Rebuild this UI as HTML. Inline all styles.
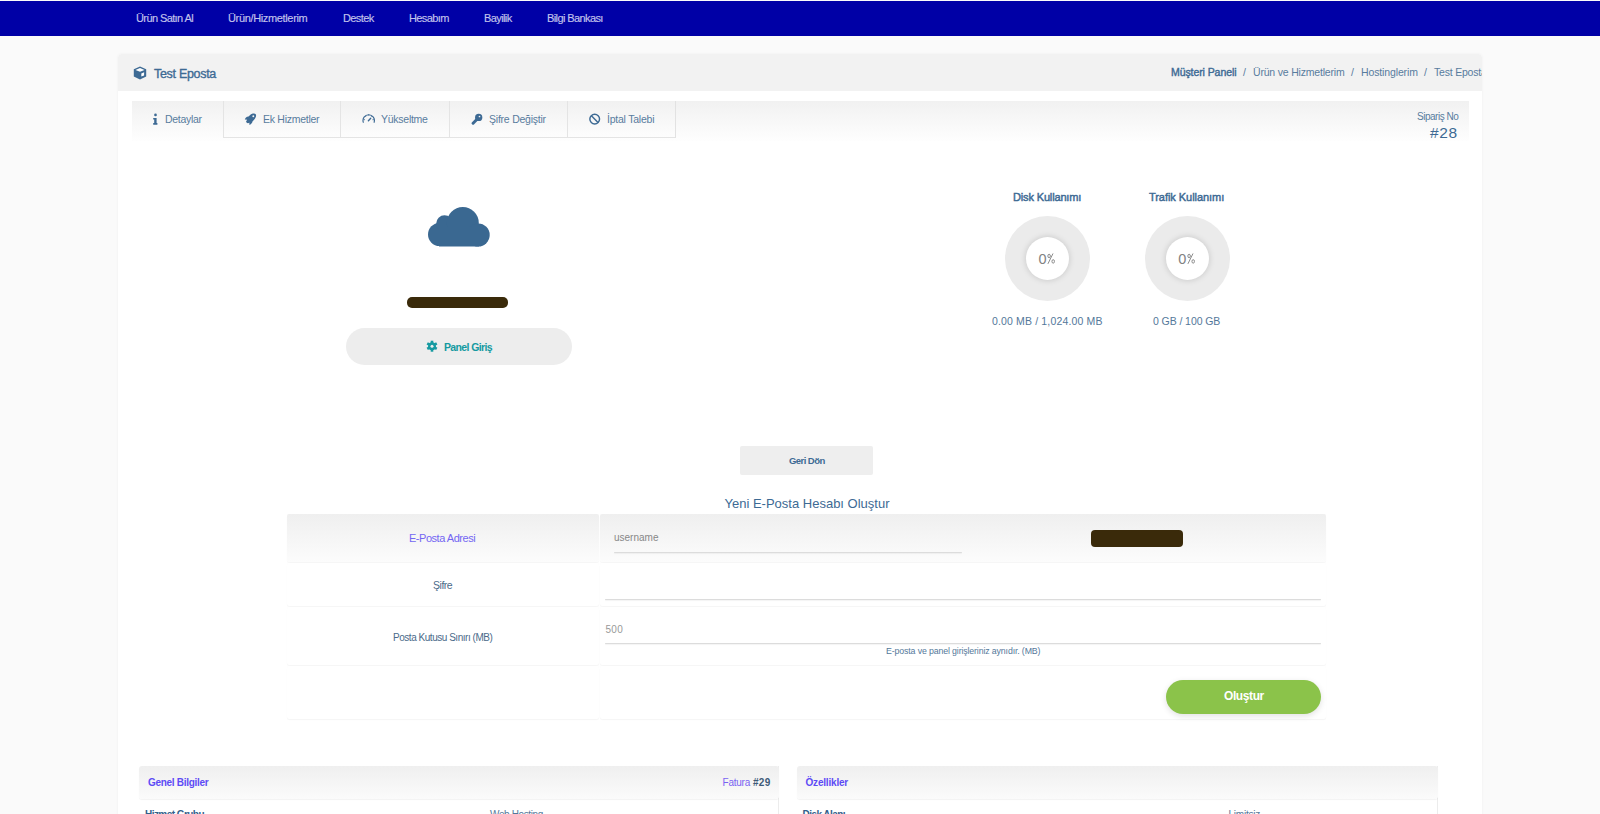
<!DOCTYPE html>
<html><head><meta charset="utf-8">
<style>
*{margin:0;padding:0;box-sizing:border-box}
html,body{width:1600px;height:814px;overflow:hidden;background:#fafafa;font-family:"Liberation Sans",sans-serif}
.a{position:absolute}
.t{position:absolute;white-space:nowrap;line-height:1}
#nav{left:0;top:1px;width:1600px;height:35px;background:#0000a6}
#nav .t{color:#c3c3ec;font-size:11px;top:12px;letter-spacing:-0.6px;-webkit-text-stroke:0.15px #c3c3ec}
#card{left:118px;top:54px;width:1364px;height:800px;background:#fff;border-radius:4px;box-shadow:0 0 3px rgba(0,0,0,0.05)}
#chead{left:118px;top:54px;width:1364px;height:37px;background:#f2f2f2;border-radius:4px 4px 0 0}
.blue{color:#3d6a94}
#tabs{left:132px;top:101px;width:1337px;height:40px;background:linear-gradient(#f1f1f1,#fefefe)}
.tab{position:absolute;top:101px;height:37px;border-left:1px solid #e4e4e4;border-bottom:1px solid #e4e4e4}
.tabt{color:#587c9e;font-size:10.5px;top:114px}
.donut{position:absolute;width:85px;height:85px;border-radius:50%;background:#ebebeb}
.donut .in{position:absolute;left:21px;top:21px;width:43px;height:43px;border-radius:50%;background:#fff;box-shadow:0 0 6px rgba(0,0,0,0.17)}
.cell{position:absolute;background:#fff;border-radius:2px;box-shadow:0 1px 1px rgba(0,0,0,0.04),0 0 1px rgba(0,0,0,0.03)}
.uline{position:absolute;height:1px;background:#dcdcdc;box-shadow:0 1px 1px rgba(0,0,0,0.05);border-radius:1px}
.redact{position:absolute;background:#3a2a0a;border-radius:4px}
.vio{color:#5d4bf5}
.pct{font-size:14.5px;color:#828282}
.pct span{display:inline-block;transform:scaleX(0.6);transform-origin:0 0;margin-left:0.8px}
.lbl{color:#4b6a89}
</style></head><body>
<div id="nav" class="a">
  <div class="t" style="left:136px">Ürün Satın Al</div>
  <div class="t" style="left:228px;letter-spacing:-0.35px">Ürün/Hizmetlerim</div>
  <div class="t" style="left:343px">Destek</div>
  <div class="t" style="left:409px">Hesabım</div>
  <div class="t" style="left:484px">Bayilik</div>
  <div class="t" style="left:547px">Bilgi Bankası</div>
</div>

<div id="card" class="a"></div>
<div id="chead" class="a"></div>
<!-- cube icon -->
<svg class="a" style="left:133px;top:66px" width="14" height="14" viewBox="0 0 14 14">
  <path d="M7 0.6 L13.2 3.2 L13.2 10.6 L7 13.4 L0.8 10.6 L0.8 3.2 Z" fill="#3d6a94"/>
  <path d="M7 2.1 L11.5 3.9 L7 5.7 L2.5 3.9 Z" fill="#fff"/>
  <path d="M8.3 7.6 L11.1 6.3 L11.1 9.4 L8.3 10.6 Z" fill="#fff"/>
</svg>
<div class="t blue" style="left:154px;top:68px;font-size:12.5px;-webkit-text-stroke:0.35px #3d6a94;letter-spacing:-0.3px">Test Eposta</div>

<!-- breadcrumb -->
<div class="a" style="left:1150px;top:54px;width:332px;height:37px;overflow:hidden">
  <div class="t" style="left:21px;top:13px;font-size:10.5px;-webkit-text-stroke:0.4px #3d6a94;color:#3d6a94;letter-spacing:-0.08px">Müşteri Paneli</div>
  <div class="t" style="left:93px;top:13px;font-size:10.5px;color:#587c9e">/</div>
  <div class="t" style="left:103px;top:13px;font-size:10.5px;color:#587c9e;letter-spacing:-0.19px">Ürün ve Hizmetlerim</div>
  <div class="t" style="left:201px;top:13px;font-size:10.5px;color:#587c9e">/</div>
  <div class="t" style="left:211px;top:13px;font-size:10.5px;color:#587c9e;letter-spacing:-0.13px">Hostinglerim</div>
  <div class="t" style="left:274px;top:13px;font-size:10.5px;color:#587c9e">/</div>
  <div class="t" style="left:284px;top:13px;font-size:10.5px;color:#587c9e;letter-spacing:-0.2px">Test Eposta</div>
</div>

<!-- tabs -->
<div id="tabs" class="a"></div>
<div class="a" style="left:132px;top:101px;width:92px;height:40px;background:linear-gradient(#f1f1f1,#fefefe)"></div>
<div class="tab" style="left:223px;width:118px"></div>
<div class="tab" style="left:340px;width:109px"></div>
<div class="tab" style="left:449px;width:119px"></div>
<div class="tab" style="left:567px;width:109px;border-right:1px solid #e2e2e2"></div>
<!-- info icon -->
<svg class="a" style="left:152px;top:113px" width="6" height="12" viewBox="0 0 6 12">
  <circle cx="3.5" cy="1.9" r="1.35" fill="#3d6a94"/>
  <path d="M1.2 5 H4.6 V10 H5.4 V11.8 H1.2 V10 H2.2 V6.6 H1.2 Z" fill="#3d6a94"/>
</svg>
<div class="t tabt" style="left:165px;letter-spacing:-0.3px">Detaylar</div>
<!-- rocket icon -->
<svg class="a" style="left:244px;top:113px" width="13" height="13" viewBox="0 0 13 13">
  <g fill="#3d6a94">
  <ellipse cx="7.5" cy="5" rx="5.7" ry="3.1" transform="rotate(-45 7.5 5)"/>
  <path d="M5.4 3.4 L3 3.8 C2.2 4.2 1.3 5.3 0.8 6.6 L4 6.8 Z"/>
  <path d="M8.6 6.6 L8.3 9.2 C7.9 10.2 6.7 11.4 5.5 11.9 L5.2 8.7 Z"/>
  <circle cx="3.9" cy="8.6" r="1.7"/>
  </g>
  <circle cx="9.3" cy="3.3" r="0.95" fill="#f3f3f3"/>
</svg>
<div class="t tabt" style="left:263px;letter-spacing:-0.27px">Ek Hizmetler</div>
<!-- gauge icon -->
<svg class="a" style="left:362px;top:113px" width="13" height="11" viewBox="0 0 13 11">
  <path d="M1.3 9.3 A5.7 5.7 0 1 1 12.1 9.3" fill="none" stroke="#3d6a94" stroke-width="1.15" stroke-linecap="round"/>
  <path d="M6.4 7.7 L8.7 5.3" stroke="#3d6a94" stroke-width="1.4" stroke-linecap="round"/>
  <path d="M1.6 6.7 H2.9 M10.5 6.7 H11.8 M3.4 3.2 L4.2 4 M6.7 1.4 V2.6 M10 3.2 L9.2 4" stroke="#3d6a94" stroke-width="0.9"/>
</svg>
<div class="t tabt" style="left:381px;letter-spacing:-0.26px">Yükseltme</div>
<!-- key icon -->
<svg class="a" style="left:471px;top:113px" width="12" height="12" viewBox="0 0 12 12">
  <circle cx="7.7" cy="4.4" r="3.65" fill="#3d6a94"/>
  <path d="M6 6.3 L2.1 10.2" stroke="#3d6a94" stroke-width="3" stroke-linecap="round"/>
  <circle cx="8.5" cy="3.5" r="0.85" fill="#f3f3f3"/>
</svg>
<div class="t tabt" style="left:489px;letter-spacing:-0.23px">Şifre Değiştir</div>
<!-- ban icon -->
<svg class="a" style="left:589px;top:113px" width="12" height="13" viewBox="0 0 12 13">
  <circle cx="5.7" cy="6.1" r="4.85" fill="none" stroke="#3d6a94" stroke-width="1.45"/>
  <path d="M2.4 2.8 L9 9.4" stroke="#3d6a94" stroke-width="1.45"/>
</svg>
<div class="t tabt" style="left:607px;letter-spacing:-0.23px">İptal Talebi</div>
<div class="t" style="left:1417px;top:112px;font-size:10px;color:#587c9e;letter-spacing:-0.49px">Sipariş No</div>
<div class="t" style="left:1430px;top:125px;font-size:15.5px;color:#3d6a94;letter-spacing:0.6px">#28</div>

<!-- cloud -->
<svg class="a" style="left:428px;top:207px" width="62" height="40" viewBox="0 0 62 40">
  <g fill="#3a6891">
    <circle cx="11.5" cy="27.5" r="11.5"/>
    <circle cx="16.5" cy="16.5" r="8.3"/>
    <circle cx="34.8" cy="16" r="16"/>
    <circle cx="50.2" cy="28" r="11.5"/>
    <rect x="11" y="20" width="40" height="19.5"/>
  </g>
</svg>
<div class="redact" style="left:406.5px;top:296.5px;width:101.5px;height:11.3px;border-radius:5px"></div>
<div class="a" style="left:346px;top:328px;width:226px;height:37px;border-radius:18.5px;background:#ededed"></div>
<!-- cog -->
<svg class="a" style="left:426px;top:340px" width="12" height="12" viewBox="0 0 12 12">
  <g fill="#159aa1">
    <circle cx="6" cy="6.2" r="3.9"/>
    <g stroke="#159aa1" stroke-width="2.6">
      <path d="M6 0.7 V11.7"/><path d="M1.24 3.45 L10.76 8.95"/><path d="M1.24 8.95 L10.76 3.45"/>
    </g>
  </g>
  <circle cx="6" cy="6.2" r="1.5" fill="#ededed"/>
</svg>
<div class="t" style="left:444px;top:341.5px;font-size:10.5px;font-weight:700;color:#159aa1;letter-spacing:-0.63px">Panel Giriş</div>

<!-- gauges -->
<div class="t" style="left:1013px;top:192px;font-size:11px;-webkit-text-stroke:0.45px #3d6a94;color:#3d6a94;letter-spacing:-0.15px">Disk Kullanımı</div>
<div class="t" style="left:1149px;top:192px;font-size:11px;-webkit-text-stroke:0.45px #3d6a94;color:#3d6a94;letter-spacing:-0.05px">Trafik Kullanımı</div>
<div class="donut" style="left:1005px;top:216px"><div class="in"></div></div>
<div class="donut" style="left:1144.5px;top:216px"><div class="in"></div></div>
<div class="t pct" style="left:1038.6px;top:251.7px">0<svg style="position:absolute;left:8.6px;top:1.5px" width="9" height="12" viewBox="0 0 9 12"><g fill="none" stroke="#858585" stroke-width="0.95"><ellipse cx="2.1" cy="3" rx="1.25" ry="1.75"/><ellipse cx="6.2" cy="8.4" rx="1.25" ry="1.75"/><path d="M0.9 10.9 L6 0.5"/></g></svg></div>
<div class="t pct" style="left:1178.2px;top:251.7px">0<svg style="position:absolute;left:8.6px;top:1.5px" width="9" height="12" viewBox="0 0 9 12"><g fill="none" stroke="#858585" stroke-width="0.95"><ellipse cx="2.1" cy="3" rx="1.25" ry="1.75"/><ellipse cx="6.2" cy="8.4" rx="1.25" ry="1.75"/><path d="M0.9 10.9 L6 0.5"/></g></svg></div>
<div class="t" style="left:992px;top:315.5px;font-size:10.5px;color:#54789a;letter-spacing:0.15px">0.00 MB / 1,024.00 MB</div>
<div class="t" style="left:1153px;top:315.5px;font-size:10.5px;color:#54789a;letter-spacing:-0.08px">0 GB / 100 GB</div>

<!-- geri don -->
<div class="a" style="left:740px;top:446px;width:133px;height:28.5px;border-radius:2px;background:#eeeeee"></div>
<div class="t" style="left:789px;top:456px;font-size:9.5px;font-weight:700;color:#3d6a94;letter-spacing:-0.56px">Geri Dön</div>
<div class="t" style="left:724.5px;top:497px;font-size:13px;color:#3d6a94">Yeni E-Posta Hesabı Oluştur</div>

<!-- table -->
<div class="cell" style="left:287px;top:514px;width:311.5px;height:48px;background:linear-gradient(#efefef,#fcfcfc)"></div>
<div class="cell" style="left:600px;top:514px;width:726px;height:48px;background:linear-gradient(#efefef,#fcfcfc)"></div>
<div class="cell" style="left:287px;top:562.5px;width:311.5px;height:43.5px"></div>
<div class="cell" style="left:600px;top:562.5px;width:726px;height:43.5px"></div>
<div class="cell" style="left:287px;top:606.5px;width:311.5px;height:58.5px"></div>
<div class="cell" style="left:600px;top:606.5px;width:726px;height:58.5px"></div>
<div class="cell" style="left:287px;top:665.5px;width:311.5px;height:53px"></div>
<div class="cell" style="left:600px;top:665.5px;width:726px;height:53px"></div>

<div class="t vio" style="left:409px;top:532.7px;font-size:11px;letter-spacing:-0.47px;color:#7366f3">E-Posta Adresi</div>
<div class="t" style="left:614px;top:533px;font-size:10px;color:#888">username</div>
<div class="uline" style="left:614px;top:552px;width:348px"></div>
<div class="redact" style="left:1091px;top:530.4px;width:92px;height:16.9px;border-radius:4px"></div>

<div class="t lbl" style="left:433px;top:580.2px;font-size:10.5px;letter-spacing:-0.47px">Şifre</div>
<div class="uline" style="left:605px;top:599px;width:716px"></div>

<div class="t lbl" style="left:393px;top:632.5px;font-size:10px;letter-spacing:-0.47px">Posta Kutusu Sınırı (MB)</div>
<div class="t" style="left:605.5px;top:624.5px;font-size:10px;color:#999;letter-spacing:0.27px">500</div>
<div class="uline" style="left:605px;top:643px;width:716px"></div>
<div class="t" style="left:886px;top:647.4px;font-size:8.8px;color:#54789a;letter-spacing:-0.14px">E-posta ve panel girişleriniz aynıdır. (MB)</div>

<div class="a" style="left:1166px;top:679.5px;width:155px;height:34px;border-radius:17px;background:#8bc34a;box-shadow:0 2px 6px rgba(0,0,0,0.12)"></div>
<div class="t" style="left:1224px;top:690px;font-size:12px;font-weight:700;color:#fff;letter-spacing:-0.4px">Oluştur</div>

<!-- bottom panels -->
<div class="a" style="left:139px;top:766px;width:640px;height:60px;border-right:1px solid #ececec"></div>
<div class="a" style="left:139px;top:766px;width:640px;height:33px;border-radius:3px;background:linear-gradient(#efefef,#fbfbfb);box-shadow:0 1px 1px rgba(0,0,0,0.05)"></div>
<div class="a" style="left:797px;top:766px;width:641px;height:60px;border-right:1px solid #ececec"></div>
<div class="a" style="left:797px;top:766px;width:641px;height:33px;border-radius:3px;background:linear-gradient(#efefef,#fbfbfb);box-shadow:0 1px 1px rgba(0,0,0,0.05)"></div>
<div class="t vio" style="left:148px;top:777.5px;font-size:10px;font-weight:700;letter-spacing:-0.29px">Genel Bilgiler</div>
<div class="t" style="left:722.5px;top:777.5px;font-size:10px;color:#7a63f2;letter-spacing:-0.23px">Fatura</div>
<div class="t" style="left:753px;top:777.5px;font-size:10px;font-weight:700;color:#3d5a78;letter-spacing:0.3px">#29</div>
<div class="t vio" style="left:805.5px;top:777.5px;font-size:10px;font-weight:700;letter-spacing:-0.19px">Özellikler</div>
<div class="t" style="left:145px;top:809.6px;font-size:10px;font-weight:700;color:#33608a;letter-spacing:-0.55px">Hizmet Grubu</div>
<div class="t" style="left:490px;top:809.6px;font-size:10px;color:#54789a;letter-spacing:-0.37px">Web Hosting</div>
<div class="t" style="left:802.5px;top:809.6px;font-size:10px;font-weight:700;color:#33608a;letter-spacing:-0.55px">Disk Alanı</div>
<div class="t" style="left:1228.5px;top:809.6px;font-size:10px;color:#54789a;letter-spacing:-0.24px">Limitsiz</div>
</body></html>
